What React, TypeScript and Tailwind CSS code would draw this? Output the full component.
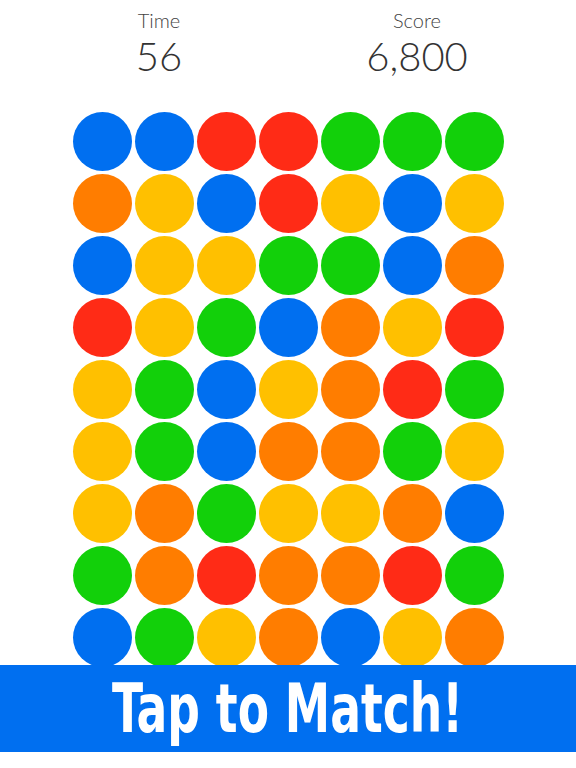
const COLORS: Record<string, string> = {
  B: "bg-[#006ff0]",
  R: "bg-[#ff2b16]",
  O: "bg-[#ff7d00]",
  Y: "bg-[#ffc000]",
  G: "bg-[#12d00a]",
};

const BOARD = [
  "BBRRGGG",
  "OYBRYBY",
  "BYYGGBO",
  "RYGBOYR",
  "YGBYORG",
  "YGBOOGY",
  "YOGYYOB",
  "GOROORG",
  "BGYOBYO",
];

function Stat({ label, value }: { label: string; value: string }) {
  return (
    <div className="flex flex-col items-center">
      <p className="text-[20px] leading-[24px] text-[#444]">{label}</p>
      <p className="mt-[2px] text-[40px] leading-[44px] text-[#333]">{value}</p>
    </div>
  );
}

export default function App() {
  return (
    <main
      className="h-[768px] w-[576px] overflow-hidden bg-white"
      style={{ fontFamily: "Lato, 'Open Sans', sans-serif" }}
    >
      <header className="mx-auto grid h-[112px] w-[516px] grid-cols-2 pt-[8px] font-light">
        <Stat label="Time" value="56" />
        <Stat label="Score" value="6,800" />
      </header>

      <div className="h-[553px] overflow-hidden">
        <div className="mx-auto grid w-[431px] grid-cols-[repeat(7,59px)] gap-[3px]">
          {BOARD.flatMap((row, r) =>
            row.split("").map((c, i) => (
              <div key={`${r}-${i}`} className={`h-[59px] w-[59px] rounded-full ${COLORS[c]}`} />
            ))
          )}
        </div>
      </div>

      <div className="flex h-[87px] items-center justify-center bg-[#006ff0]">
        <p
          className="scale-x-[0.745] whitespace-nowrap text-[68px] font-bold leading-none text-white"
          style={{ fontFamily: "'DejaVu Sans Condensed', 'Liberation Sans', sans-serif" }}
        >
          Tap to Match!
        </p>
      </div>
    </main>
  );
}
